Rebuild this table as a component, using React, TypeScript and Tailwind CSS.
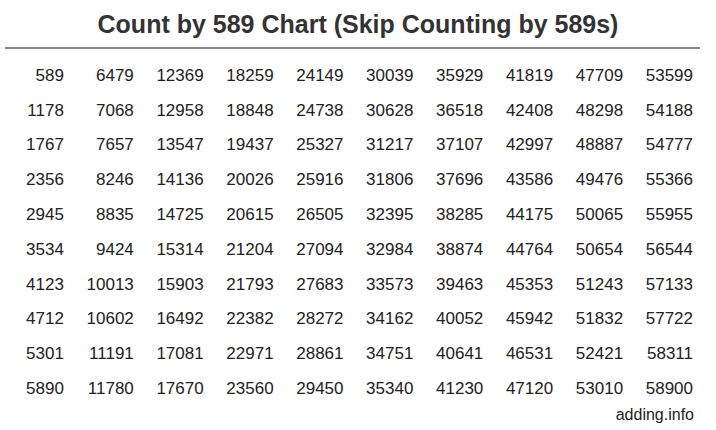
import React from 'react';

const STEP = 589;
const ROWS = 10;
const COLS = 10;

const App: React.FC = () => {
  const rows = Array.from({ length: ROWS }, (_, r) =>
    Array.from({ length: COLS }, (_, c) => (c * ROWS + r + 1) * STEP)
  );

  return (
    <div className="w-[716px] h-[430px] bg-white text-[#222] font-['Liberation_Sans',Arial,sans-serif] overflow-hidden">
      <h1 className="pt-[9px] h-[38px] text-center text-[25px] leading-[30px] font-bold text-[#333]">
        Count by 589 Chart (Skip Counting by 589s)
      </h1>
      <div className="ml-[5px] mt-[9px] w-[695px] border-t-2 border-[#888]" />
      <div className="ml-[3px] mt-[9px] w-[699px]">
        {rows.map((row, r) => (
          <div key={r} className="grid grid-cols-10 h-[34.8px] items-center">
            {row.map((n) => (
              <div key={n} className="text-right pr-[9px] text-[17px] leading-none">
                {n}
              </div>
            ))}
          </div>
        ))}
      </div>
      <div className="mt-[1px] pr-[22px] text-right text-[16px] leading-none text-[#222]">
        adding.info
      </div>
    </div>
  );
};

export default App;
